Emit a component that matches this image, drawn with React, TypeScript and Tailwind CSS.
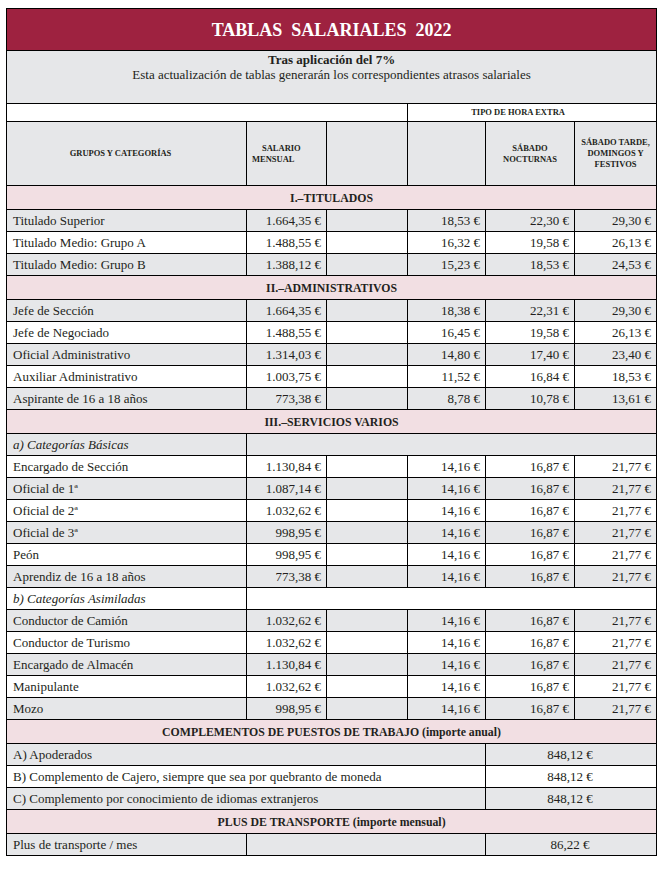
type Row =
  | { kind: 'section'; label: string }
  | { kind: 'data'; name: string; salary: string; h1: string; h2: string; h3: string; gray: boolean }
  | { kind: 'sub'; name: string; gray: boolean }
  | { kind: 'comp'; name: string; value: string; gray: boolean }
  | { kind: 'plus'; name: string; value: string; gray: boolean };

const rows: Row[] = [
  { kind: 'section', label: 'I.–TITULADOS' },
  { kind: 'data', name: 'Titulado Superior', salary: '1.664,35 €', h1: '18,53 €', h2: '22,30 €', h3: '29,30 €', gray: true },
  { kind: 'data', name: 'Titulado Medio: Grupo A', salary: '1.488,55 €', h1: '16,32 €', h2: '19,58 €', h3: '26,13 €', gray: false },
  { kind: 'data', name: 'Titulado Medio: Grupo B', salary: '1.388,12 €', h1: '15,23 €', h2: '18,53 €', h3: '24,53 €', gray: true },
  { kind: 'section', label: 'II.–ADMINISTRATIVOS' },
  { kind: 'data', name: 'Jefe de Sección', salary: '1.664,35 €', h1: '18,38 €', h2: '22,31 €', h3: '29,30 €', gray: true },
  { kind: 'data', name: 'Jefe de Negociado', salary: '1.488,55 €', h1: '16,45 €', h2: '19,58 €', h3: '26,13 €', gray: false },
  { kind: 'data', name: 'Oficial Administrativo', salary: '1.314,03 €', h1: '14,80 €', h2: '17,40 €', h3: '23,40 €', gray: true },
  { kind: 'data', name: 'Auxiliar Administrativo', salary: '1.003,75 €', h1: '11,52 €', h2: '16,84 €', h3: '18,53 €', gray: false },
  { kind: 'data', name: 'Aspirante de 16 a 18 años', salary: '773,38 €', h1: '8,78 €', h2: '10,78 €', h3: '13,61 €', gray: true },
  { kind: 'section', label: 'III.–SERVICIOS VARIOS' },
  { kind: 'sub', name: 'a) Categorías Básicas', gray: true },
  { kind: 'data', name: 'Encargado de Sección', salary: '1.130,84 €', h1: '14,16 €', h2: '16,87 €', h3: '21,77 €', gray: false },
  { kind: 'data', name: 'Oficial de 1ª', salary: '1.087,14 €', h1: '14,16 €', h2: '16,87 €', h3: '21,77 €', gray: true },
  { kind: 'data', name: 'Oficial de 2ª', salary: '1.032,62 €', h1: '14,16 €', h2: '16,87 €', h3: '21,77 €', gray: false },
  { kind: 'data', name: 'Oficial de 3ª', salary: '998,95 €', h1: '14,16 €', h2: '16,87 €', h3: '21,77 €', gray: true },
  { kind: 'data', name: 'Peón', salary: '998,95 €', h1: '14,16 €', h2: '16,87 €', h3: '21,77 €', gray: false },
  { kind: 'data', name: 'Aprendiz de 16 a 18 años', salary: '773,38 €', h1: '14,16 €', h2: '16,87 €', h3: '21,77 €', gray: true },
  { kind: 'sub', name: 'b) Categorías Asimiladas', gray: false },
  { kind: 'data', name: 'Conductor de Camión', salary: '1.032,62 €', h1: '14,16 €', h2: '16,87 €', h3: '21,77 €', gray: true },
  { kind: 'data', name: 'Conductor de Turismo', salary: '1.032,62 €', h1: '14,16 €', h2: '16,87 €', h3: '21,77 €', gray: false },
  { kind: 'data', name: 'Encargado de Almacén', salary: '1.130,84 €', h1: '14,16 €', h2: '16,87 €', h3: '21,77 €', gray: true },
  { kind: 'data', name: 'Manipulante', salary: '1.032,62 €', h1: '14,16 €', h2: '16,87 €', h3: '21,77 €', gray: false },
  { kind: 'data', name: 'Mozo', salary: '998,95 €', h1: '14,16 €', h2: '16,87 €', h3: '21,77 €', gray: true },
  { kind: 'section', label: 'COMPLEMENTOS DE PUESTOS DE TRABAJO (importe anual)' },
  { kind: 'comp', name: 'A) Apoderados', value: '848,12 €', gray: true },
  { kind: 'comp', name: 'B) Complemento de Cajero, siempre que sea por quebranto de moneda', value: '848,12 €', gray: false },
  { kind: 'comp', name: 'C) Complemento por conocimiento de idiomas extranjeros', value: '848,12 €', gray: true },
  { kind: 'section', label: 'PLUS DE TRANSPORTE (importe mensual)' },
  { kind: 'plus', name: 'Plus de transporte / mes', value: '86,22 €', gray: true },
];

const cell = 'border border-black p-0 align-middle';
const num = `${cell} text-right pr-[5px]`;

function BodyRow({ row }: { row: Row }) {
  if (row.kind === 'section') {
    return (
      <tr className="h-[24px] bg-[#f2dfe3]">
        <td colSpan={6} className={`${cell} text-center font-bold text-[11.8px] pt-[2px]`}>
          {row.label}
        </td>
      </tr>
    );
  }
  const bg = row.gray ? 'bg-[#e6e7e9]' : 'bg-white';
  if (row.kind === 'sub') {
    return (
      <tr className={`h-[22px] ${bg}`}>
        <td className={`${cell} pl-[6px] italic`}>{row.name}</td>
        <td colSpan={5} className={cell}></td>
      </tr>
    );
  }
  if (row.kind === 'comp') {
    return (
      <tr className={`h-[22px] ${bg}`}>
        <td colSpan={4} className={`${cell} pl-[6px]`}>{row.name}</td>
        <td colSpan={2} className={`${cell} text-center pr-[2px]`}>{row.value}</td>
      </tr>
    );
  }
  if (row.kind === 'plus') {
    return (
      <tr className={`h-[22px] ${bg}`}>
        <td className={`${cell} pl-[6px]`}>{row.name}</td>
        <td colSpan={3} className={cell}></td>
        <td colSpan={2} className={`${cell} text-center pr-[2px]`}>{row.value}</td>
      </tr>
    );
  }
  return (
    <tr className={`h-[22px] ${bg}`}>
      <td className={`${cell} pl-[6px]`}>{row.name}</td>
      <td className={num}>{row.salary}</td>
      <td className={cell}></td>
      <td className={num}>{row.h1}</td>
      <td className={num}>{row.h2}</td>
      <td className={num}>{row.h3}</td>
    </tr>
  );
}

export default function App() {
  return (
    <div className="min-h-[872px] bg-white pl-[6px] pt-[8px] font-['Liberation_Serif',serif] text-[13px] leading-none text-[#231f20]">
      <table className="w-[650px] table-fixed border-collapse">
        <colgroup>
          <col className="w-[240px]" />
          <col className="w-[80px]" />
          <col className="w-[81px]" />
          <col className="w-[78px]" />
          <col className="w-[89px]" />
          <col className="w-[82px]" />
        </colgroup>
        <tbody>
          <tr className="h-[42px] bg-[#9e2240]">
            <td colSpan={6} className={`${cell} text-center text-white font-bold text-[18px] whitespace-pre`}>
              {'TABLAS  SALARIALES  2022'}
            </td>
          </tr>
          <tr className="h-[53px] bg-[#e6e7e9]">
            <td colSpan={6} className={`${cell} align-top text-center pt-[1px]`}>
              <p className="font-bold text-[13px] leading-[15px]">Tras aplicación del 7%</p>
              <p className="text-[13px] leading-[15px]">
                Esta actualización de tablas generarán los correspondientes atrasos salariales
              </p>
            </td>
          </tr>
          <tr className="h-[18px] bg-white">
            <td colSpan={3} className={cell}></td>
            <td colSpan={3} className={`${cell} text-center font-bold text-[8.5px] pr-[28px]`}>
              TIPO DE HORA EXTRA
            </td>
          </tr>
          <tr className="h-[64px] bg-[#e6e7e9] font-bold text-[8.5px] leading-[11px]">
            <td className={`${cell} text-center pr-[12px]`}>GRUPOS Y CATEGORÍAS</td>
            <td className={`${cell} pl-[5px]`}>
              <p className="pl-[10px]">SALARIO</p>
              <p>MENSUAL</p>
            </td>
            <td className={cell}></td>
            <td className={cell}></td>
            <td className={`${cell} text-center`}>
              <p>SÁBADO</p>
              <p>NOCTURNAS</p>
            </td>
            <td className={`${cell} text-center`}>
              <p>SÁBADO TARDE,</p>
              <p>DOMINGOS Y</p>
              <p>FESTIVOS</p>
            </td>
          </tr>
          {rows.map((row, i) => (
            <BodyRow key={i} row={row} />
          ))}
        </tbody>
      </table>
    </div>
  );
}
